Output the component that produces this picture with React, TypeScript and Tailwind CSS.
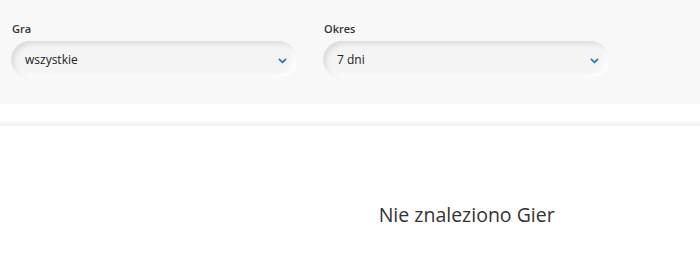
import React from 'react';

const filters = [
    { label: 'Gra', value: 'wszystkie' },
    { label: 'Okres', value: '7 dni' },
];

const Chevron = () => (
    <svg className="w-[9px] h-[6px]" viewBox="0 0 10 6" fill="none" stroke="#1f74c4" strokeWidth={1.8} strokeLinecap="round" strokeLinejoin="round">
        <path d="M1.5 1.2 5 4.6 8.5 1.2" />
    </svg>
);

export default function App() {
    return (
        <div className="w-[700px] h-[259px] bg-white overflow-hidden" style={{ fontFamily: '"Open Sans", sans-serif' }}>
            <div className="bg-[#f8f8f8] h-[104px] pt-[22px] px-[11px]">
                <div className="flex gap-[26px]">
                    {filters.map((f) => (
                        <div key={f.label} className="w-[286px]">
                            <div className="text-[11px] font-semibold text-[#333] leading-[14px] pl-px">{f.label}</div>
                            <div className="mt-[5px] h-[37px] rounded-full bg-[#f4f4f4] shadow-[inset_3px_3px_5px_rgba(0,0,0,0.1),inset_-3px_-3px_6px_rgba(255,255,255,0.9)] flex items-center justify-between pl-[14px] pr-[10px]">
                                <span className="text-[12px] text-[#222]">{f.value}</span>
                                <span className="mt-[3px]"><Chevron /></span>
                            </div>
                        </div>
                    ))}
                </div>
            </div>
            <div className="h-[17px] bg-white" />
            <div className="h-[5px] bg-gradient-to-b from-[#fbfbfb] to-[#efefef]" />
            <div className="grid grid-cols-3">
                <div />
                <div className="col-span-2 flex justify-center pt-[76px]">
                    <span className="text-[19.5px] text-[#333] leading-[26px]">Nie znaleziono Gier</span>
                </div>
            </div>
        </div>
    );
}
